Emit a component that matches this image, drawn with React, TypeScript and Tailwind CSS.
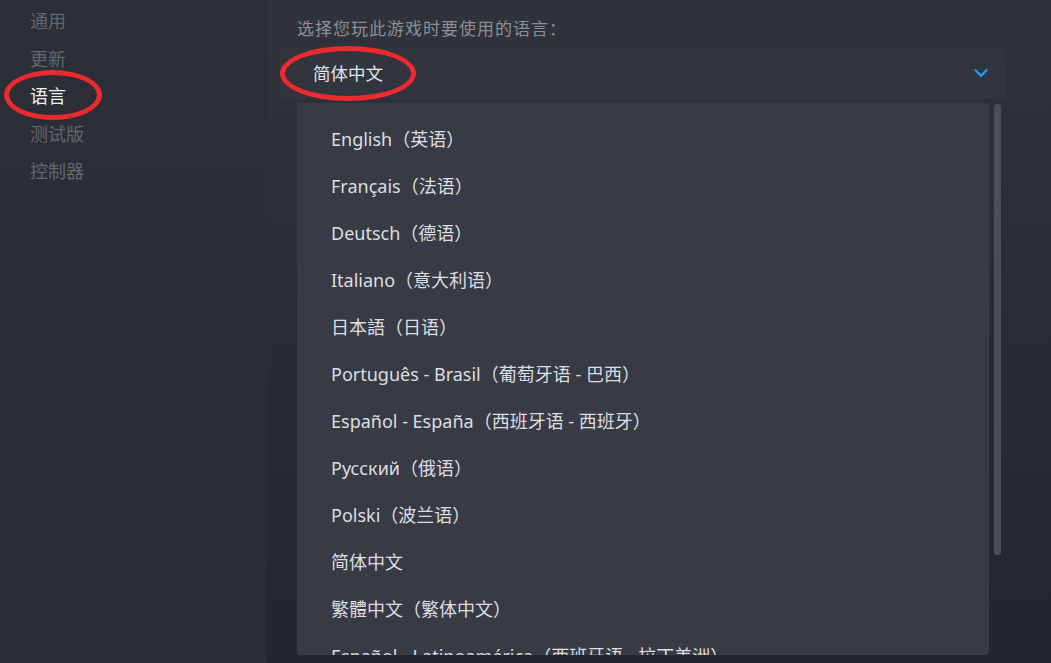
import { ChevronDown } from "lucide-react";

const sideItems = [
  { label: "通用", active: false },
  { label: "更新", active: false },
  { label: "语言", active: true },
  { label: "测试版", active: false },
  { label: "控制器", active: false },
];

const languages = [
  "English（英语）",
  "Français（法语）",
  "Deutsch（德语）",
  "Italiano（意大利语）",
  "日本語（日语）",
  "Português - Brasil（葡萄牙语 - 巴西）",
  "Español - España（西班牙语 - 西班牙）",
  "Русский（俄语）",
  "Polski（波兰语）",
  "简体中文",
  "繁體中文（繁体中文）",
  "Español - Latinoamérica（西班牙语 - 拉丁美洲）",
];

const font = { fontFamily: '"Noto Sans", "Noto Sans CJK SC", sans-serif' };

export default function App() {
  return (
    <div
      className="flex h-[663px] w-[1051px] overflow-hidden bg-[#24272e] text-[#dcdee2]"
      style={font}
    >
      {/* Sidebar */}
      <div className="relative w-[267px] shrink-0 bg-gradient-to-b from-[#2c2f37] to-[#292c34] pl-[30px] pt-[7px]">
        {sideItems.map((item) => (
          <div
            key={item.label}
            className={`h-[37.5px] text-[18px] leading-[28px] ${
              item.active ? "text-[#f2f3f5]" : "text-[#62666d]"
            }`}
          >
            {item.label}
          </div>
        ))}
        {/* annotation */}
        <div className="pointer-events-none absolute left-[4px] top-[70px] h-[50px] w-[98px] rounded-[50%] border-[5px] border-[#ee2a2e]" />
      </div>

      {/* Main */}
      <div className="relative flex-1 bg-gradient-to-b from-[#30333b] via-[#292c34] to-[#23262d] pl-[13px]">
        <div className="pl-[17px] pt-[17px] text-[17px] leading-[24px] tracking-[1px] text-[#8c8f96]">
          选择您玩此游戏时要使用的语言：
        </div>

        <div className="mt-[6px] flex h-[52px] w-[726px] items-center justify-between rounded-[4px] bg-[#32353d] pl-[33px] pr-[14px]">
          <span className="text-[17.5px] text-[#e4e6ea]">简体中文</span>
          <ChevronDown size={22} strokeWidth={2.5} className="text-[#1a9fff]" />
        </div>

        <div className="mt-[4px] flex">
          <div className="ml-[17px] h-[552px] w-[692px] overflow-hidden rounded-[3px] bg-[#383b44] pt-[13px]">
            {languages.map((lang) => (
              <div
                key={lang}
                className="flex h-[47px] items-center pl-[34px] text-[18px] text-[#dcdee3]"
              >
                {lang}
              </div>
            ))}
          </div>
          <div className="ml-[5px] mt-[1px] h-[451px] w-[7px] rounded-[3px] bg-[#4a4e57]" />
        </div>

        {/* annotation */}
        <div className="pointer-events-none absolute left-[13px] top-[46px] h-[55px] w-[136px] rounded-[50%] border-[5px] border-[#ee2a2e]" />
      </div>
    </div>
  );
}
